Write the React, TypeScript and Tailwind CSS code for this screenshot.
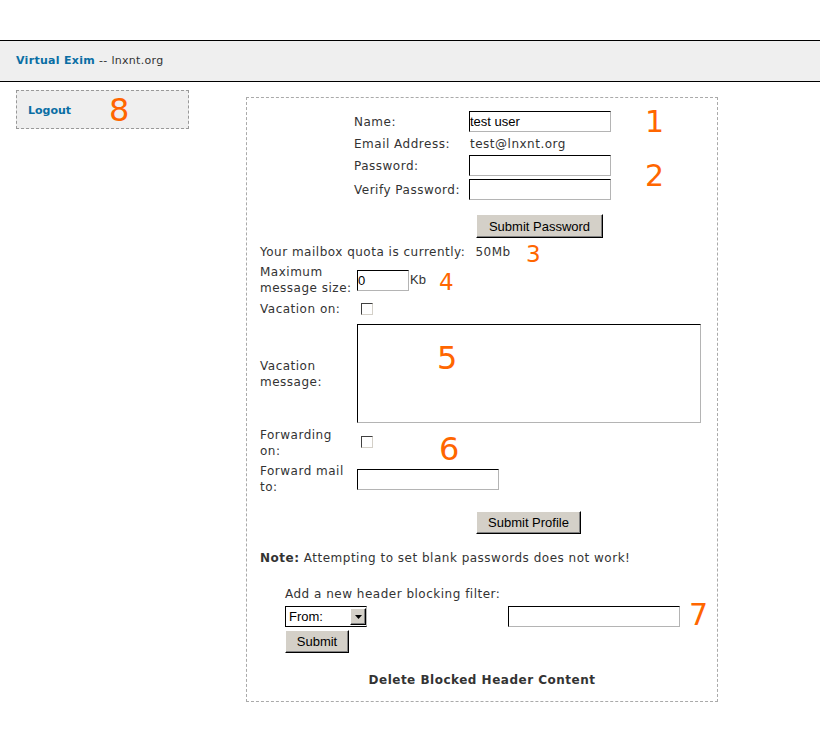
import React from "react";

const inputCls =
  "bg-white border border-t-black border-l-black border-r-[#b4b4b4] border-b-[#b4b4b4] font-['Liberation_Sans',Arial,sans-serif] text-[13px] tracking-normal text-black leading-[19px] px-0 outline-none";
const btnCls =
  "bg-[#d4d0c8] border border-t-white border-l-white border-r-black border-b-black shadow-[inset_-1px_-1px_0_#808080] font-['Liberation_Sans',Arial,sans-serif] text-[13px] tracking-normal text-black leading-none flex items-center justify-center";
const checkCls =
  "w-[12px] h-[12px] bg-white border border-t-[#404040] border-l-[#404040] border-r-[#d4d0c8] border-b-[#d4d0c8]";

function Num({ n, className }: { n: string; className: string }) {
  return (
    <span
      className={
        "absolute leading-none tracking-normal text-[#ff6600] font-['DejaVu_Sans',sans-serif] font-normal " +
        className
      }
    >
      {n}
    </span>
  );
}

export default function App() {
  return (
    <div className="relative min-h-[749px] w-[820px] bg-white font-['DejaVu_Sans',sans-serif] text-[12px] tracking-[0.5px] text-[#333]">
      <div className="h-[40px]" />
      <div className="flex h-[42px] items-center border-y border-black bg-[#efefef] pl-[16px] text-[11px] tracking-[0.3px]">
        <span className="font-bold text-[#0a6ea4]">Virtual Exim</span>
        <span className="ml-[4px] text-[#333]">-- lnxnt.org</span>
      </div>

      <div className="flex items-start pl-[16px]">
        <div className="mt-[8px] flex h-[39px] w-[173px] items-center border border-dashed border-[#999] bg-[#efefef] pl-[11px] pt-[3px] text-[11px] tracking-normal font-bold text-[#0a6ea4]">
          Logout
        </div>

        <div className="ml-[57px] mt-[15px] flex h-[605px] w-[472px] flex-col border border-dashed border-[#aaa] pt-[13px]">
          <div className="flex flex-col pl-[13px]">
            {/* top section */}
            <div className="ml-[94px] grid grid-cols-[115px_auto] grid-rows-[22px_22px_24px_22px]">
              <div className="leading-[23px]">Name:</div>
              <div>
                <input
                  readOnly
                  value="test user"
                  className={inputCls + " w-[142px] h-[21px]"}
                />
              </div>
              <div className="flex items-center">Email Address:</div>
              <div className="flex items-center pl-[1px]">test@lnxnt.org</div>
              <div className="leading-[23px]">Password:</div>
              <div>
                <input readOnly type="password" className={inputCls + " w-[142px] h-[21px]"} />
              </div>
              <div className="leading-[23px] whitespace-nowrap">Verify Password:</div>
              <div>
                <input readOnly type="password" className={inputCls + " w-[142px] h-[21px]"} />
              </div>
            </div>

            <div className="ml-[216px] mt-[13px]">
              <div className={btnCls + " w-[127px] h-[24px]"}>Submit Password</div>
            </div>

            <div className="mt-[6px] flex leading-[16px]">
              <span>Your mailbox quota is currently:</span>
              <span className="ml-[10px]">50Mb</span>
            </div>

            <div className="mt-[4px] flex h-[32px] items-center">
              <div className="w-[97px] whitespace-nowrap leading-[16px]">
                Maximum
                <br />
                message size:
              </div>
              <input readOnly value="0" className={inputCls + " w-[52px] h-[21px]"} />
              <span className="ml-[1px] font-['Liberation_Sans',Arial,sans-serif] text-[13px] tracking-normal">Kb</span>
            </div>

            <div className="mt-[5px] flex h-[16px] items-center">
              <div className="w-[97px] whitespace-nowrap leading-[16px]">Vacation on:</div>
              <div className={checkCls + " ml-[4px]"} />
            </div>

            <div className="mt-[7px] flex h-[99px] items-center">
              <div className="w-[97px] whitespace-nowrap leading-[16px]">
                Vacation
                <br />
                message:
              </div>
              <textarea readOnly className={inputCls + " w-[344px] h-[99px] resize-none"} />
            </div>

            <div className="mt-[4px] flex h-[32px] items-center">
              <div className="w-[97px] whitespace-nowrap leading-[16px]">
                Forwarding
                <br />
                on:
              </div>
              <div className={checkCls + " ml-[4px] -mt-[3px]"} />
            </div>

            <div className="mt-[4px] flex h-[32px] items-center">
              <div className="w-[97px] whitespace-nowrap leading-[16px]">
                Forward mail
                <br />
                to:
              </div>
              <input readOnly className={inputCls + " w-[142px] h-[21px]"} />
            </div>

            <div className="ml-[216px] mt-[16px]">
              <div className={btnCls + " w-[105px] h-[23px]"}>Submit Profile</div>
            </div>

            <div className="mt-[16px] whitespace-nowrap leading-[16px]">
              <span className="font-bold">Note:</span> Attempting to set blank passwords does not work!
            </div>

            <div className="ml-[25px] mt-[20px] leading-[16px]">Add a new header blocking filter:</div>

            <div className="ml-[25px] mt-[4px] flex h-[21px] items-center">
              <div className="flex h-[21px] w-[82px] items-center border border-t-black border-l-black border-b-black border-r-[#b4b4b4] bg-white">
                <span className="flex-1 pl-[3px] font-['Liberation_Sans',Arial,sans-serif] text-[13px] tracking-normal leading-none text-black">
                  From:
                </span>
                <div className="flex h-[17px] w-[16px] items-center justify-center border border-t-white border-l-white border-r-black border-b-black bg-[#d4d0c8] shadow-[inset_-1px_-1px_0_#808080]">
                  <svg width="7" height="4" viewBox="0 0 7 4">
                    <path d="M0 0h7L3.5 4z" fill="#000" />
                  </svg>
                </div>
              </div>
              <input readOnly className={inputCls + " ml-[141px] w-[172px] h-[21px]"} />
            </div>

            <div className="ml-[25px] mt-[3px]">
              <div className={btnCls + " w-[64px] h-[23px]"}>Submit</div>
            </div>
          </div>

          <div className="mt-[19px] text-center font-bold leading-[16px]">Delete Blocked Header Content</div>
        </div>
      </div>

      <Num n="1" className="left-[645px] top-[107px] text-[30px]" />
      <Num n="2" className="left-[645px] top-[161px] text-[30px]" />
      <Num n="3" className="left-[526px] top-[243px] text-[23px]" />
      <Num n="4" className="left-[439px] top-[271px] text-[23px]" />
      <Num n="5" className="left-[437px] top-[342px] text-[32px]" />
      <Num n="6" className="left-[439px] top-[433px] text-[32px]" />
      <Num n="7" className="left-[689px] top-[600px] text-[30px]" />
      <Num n="8" className="left-[109px] top-[94px] text-[32px]" />
    </div>
  );
}
